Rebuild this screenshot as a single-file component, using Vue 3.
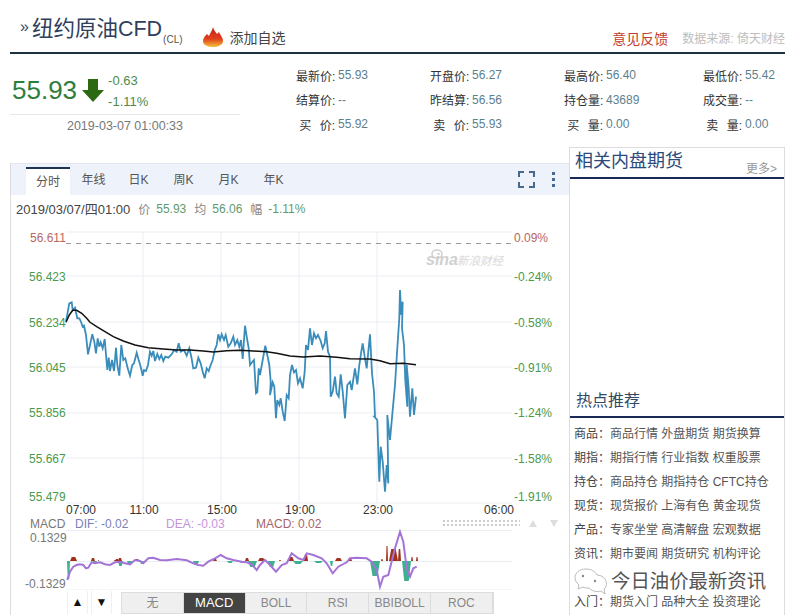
<template>
  <div class="page">
    <header class="head">
      <span class="mark">»</span>
      <h1 class="title">纽约原油CFD</h1>
      <span class="code">(CL)</span>
      <svg class="flame" width="22" height="22" viewBox="0 0 22 22">
        <defs>
          <linearGradient id="flameFill" x1="0" y1="0" x2="0" y2="1">
            <stop offset="0" stop-color="#c8201a" />
            <stop offset="0.6" stop-color="#e0401c" />
            <stop offset="1" stop-color="#f6c23c" />
          </linearGradient>
        </defs>
        <path d="M11 1 C12 5 14 6 15 8 L17 6 C18 9 21 11 21 15 C21 19 16 21 11 21 C6 21 1 19 1 15 C1 12 3 10 5 8 L7 10 C8 7 10 5 11 1 Z" fill="url(#flameFill)" />
      </svg>
      <span class="add">添加自选</span>
      <span class="feedback">意见反馈</span>
      <span class="source">数据来源: 倚天财经</span>
    </header>

    <section class="quote">
      <div class="price-box">
        <div class="price-row">
          <span class="price">55.93</span>
          <svg width="22" height="23" viewBox="0 0 22 23" class="down">
            <path d="M6 0 H16 V11 H22 L11 23 L0 11 H6 Z" fill="#2b6a12" />
          </svg>
          <div class="change">
            <div>-0.63</div>
            <div>-1.11%</div>
          </div>
        </div>
        <div class="time">2019-03-07 01:00:33</div>
      </div>
      <div class="stats">
        <div v-for="s in stats" :key="s.label" class="stat">
          <span class="stat-label">{{ s.label }}:</span>
          <span class="stat-value">{{ s.value }}</span>
        </div>
      </div>
    </section>

    <main class="main">
      <section class="panel">
        <div class="toolbar">
          <span v-for="(t, i) in tabs" :key="t" :class="['tab', { on: i === 0 }]">{{ t }}</span>
          <svg class="full" width="17" height="17" viewBox="0 0 17 17" fill="none" stroke="#48688c" stroke-width="2">
            <path d="M1 6 V1 H6 M11 1 H16 V6 M16 11 V16 H11 M6 16 H1 V11" />
          </svg>
          <svg class="more" width="4" height="16" viewBox="0 0 4 16" fill="#48688c">
            <rect x="0" y="0" width="3" height="3" />
            <rect x="0" y="6" width="3" height="3" />
            <rect x="0" y="12" width="3" height="3" />
          </svg>
        </div>
        <div class="info">
          <span class="info-date">2019/03/07/四01:00</span>
          <span class="info-key">价</span><span class="info-val">55.93</span>
          <span class="info-key">均</span><span class="info-val">56.06</span>
          <span class="info-key">幅</span><span class="info-val">-1.11%</span>
        </div>

        <svg class="chart" width="557" height="368" viewBox="11 222 557 368">
          <g stroke="#e9edf2" stroke-width="1">
            <line v-for="y in gridY" :key="y" x1="66" x2="512" :y1="y" :y2="y" />
            <line v-for="x in gridX" :key="x" :x1="x" :x2="x" y1="232" y2="503" />
            <line x1="66" x2="512" y1="530.5" y2="530.5" />
            <line x1="66" x2="512" y1="561.5" y2="561.5" />
            <line x1="66" x2="512" y1="590" y2="590" />
          </g>
          <line x1="66" x2="512" y1="243.5" y2="243.5" stroke="#999" stroke-dasharray="5 5" />

          <g class="wm">
            <ellipse cx="437" cy="254" rx="5" ry="4" fill="none" stroke="#d0d0d0" stroke-width="1.5" />
            <text x="426" y="265" class="wm-en">sina</text>
            <text x="457" y="265" class="wm-cn">新浪财经</text>
          </g>

          <polyline :points="priceLine" fill="none" stroke="#3a8dbb" stroke-width="1.8" />
          <polyline :points="avgLine" fill="none" stroke="#111" stroke-width="1.5" />

          <text x="30" y="242" class="axis red">56.611</text>
          <text v-for="l in leftAxis" :key="l.t" x="29" :y="l.y" class="axis green">{{ l.t }}</text>
          <text x="514" y="242" class="axis red">0.09%</text>
          <text v-for="l in rightAxis" :key="l.t" x="514" :y="l.y" class="axis green">{{ l.t }}</text>

          <text v-for="l in timeAxis" :key="l.t" :x="l.x" y="514" class="axis time-l" text-anchor="middle">{{ l.t }}</text>

          <text x="30" y="528" class="axis macd-k">MACD</text>
          <text x="75" y="528" class="axis dif">DIF: -0.02</text>
          <text x="166" y="528" class="axis dea">DEA: -0.03</text>
          <text x="256" y="528" class="axis mac">MACD: 0.02</text>
          <text x="30" y="542" class="axis macd-k">0.1329</text>
          <text x="25" y="588" class="axis macd-k">-0.1329</text>

          <line x1="443" x2="520" y1="521" y2="521" stroke="#ccc" stroke-width="2" stroke-dasharray="2 2" />
          <line x1="443" x2="520" y1="525" y2="525" stroke="#ccc" stroke-width="2" stroke-dasharray="2 2" />
          <path d="M529 527 L533 520 L537 527 Z M550 520 L558 520 L554 527 Z" fill="#ddd" />

          <polygon v-for="(b, i) in upBars" :key="'u' + i" :points="barShape(b, -1)" fill="#a3301a" />
          <polygon v-for="(b, i) in downBars" :key="'d' + i" :points="barShape(b, 1)" fill="#3fb08f" />
          <polyline :points="macdLine" fill="none" stroke="#a374d6" stroke-width="2" />
        </svg>

        <div class="controls">
          <span class="step">▲</span>
          <span class="step">▼</span>
          <div class="inds">
            <span v-for="(n, i) in indicators" :key="n" :class="['ind', { on: i === 1 }]">{{ n }}</span>
          </div>
        </div>
      </section>

      <aside class="side">
        <div class="side-head">
          <h2>相关内盘期货</h2>
          <span class="side-more">更多&gt;</span>
        </div>
        <div class="side-empty"></div>
        <h3 class="hot-title">热点推荐</h3>
        <ul class="hot">
          <li v-for="r in hotRows" :key="r.k"><span class="hot-k">{{ r.k }}：</span>{{ r.v }}</li>
          <li class="stamp">
            <svg width="34" height="28" viewBox="0 0 34 28" fill="#fff" stroke="#bbb" stroke-width="1">
              <path d="M12 2 C5 2 1 6 1 11 C1 14 3 16 5 18 L4 22 L9 20 C11 21 13 21 15 21 C19 25 24 25 27 24 L31 27 L30 22 C33 20 33 15 31 12 C29 9 25 8 23 8 C21 4 17 2 12 2 Z" />
              <circle cx="9" cy="9" r="1.2" fill="#888" stroke="none" />
              <circle cx="21" cy="14" r="1.2" fill="#888" stroke="none" />
            </svg>
            <span>今日油价最新资讯</span>
          </li>
          <li><span class="hot-k">入门：</span>期货入门 品种大全 投资理论</li>
        </ul>
      </aside>
    </main>
  </div>
</template>

<script setup>
const stats = [
  { label: '最新价', value: '55.93' },
  { label: '开盘价', value: '56.27' },
  { label: '最高价', value: '56.40' },
  { label: '最低价', value: '55.42' },
  { label: '结算价', value: '--' },
  { label: '昨结算', value: '56.56' },
  { label: '持仓量', value: '43689' },
  { label: '成交量', value: '--' },
  { label: '买 价', value: '55.92' },
  { label: '卖 价', value: '55.93' },
  { label: '买 量', value: '0.00' },
  { label: '卖 量', value: '0.00' }
]

const tabs = ['分时', '年线', '日K', '周K', '月K', '年K']
const indicators = ['无', 'MACD', 'BOLL', 'RSI', 'BBIBOLL', 'ROC']

const hotRows = [
  { k: '商品', v: '商品行情 外盘期货 期货换算' },
  { k: '期指', v: '期指行情 行业指数 权重股票' },
  { k: '持仓', v: '商品持仓 期指持仓 CFTC持仓' },
  { k: '现货', v: '现货报价 上海有色 黄金现货' },
  { k: '产品', v: '专家坐堂 高清解盘 宏观数据' },
  { k: '资讯', v: '期市要闻 期货研究 机构评论' }
]

const gridY = [232, 276, 322, 367, 413, 458, 503]
const gridX = [143, 221, 299, 377]

const leftAxis = [
  { t: '56.423', y: 281 },
  { t: '56.234', y: 327 },
  { t: '56.045', y: 372 },
  { t: '55.856', y: 417 },
  { t: '55.667', y: 463 },
  { t: '55.479', y: 501 }
]
const rightAxis = [
  { t: '-0.24%', y: 281 },
  { t: '-0.58%', y: 327 },
  { t: '-0.91%', y: 372 },
  { t: '-1.24%', y: 417 },
  { t: '-1.58%', y: 463 },
  { t: '-1.91%', y: 501 }
]
const timeAxis = [
  { t: '07:00', x: 81 },
  { t: '11:00', x: 144 },
  { t: '15:00', x: 222 },
  { t: '19:00', x: 300 },
  { t: '23:00', x: 378 },
  { t: '06:00', x: 499 }
]

// traced off the picture, in page pixels x3 with an origin per segment
const scale = (pts, ox, oy) => pts.map(([x, y]) => `${(ox + x / 3).toFixed(1)},${(oy + y / 3).toFixed(1)}`).join(' ')

const priceLine = [
  scale([[18,110],[28,55],[35,52],[38,75],[45,68],[52,100],[58,100],[62,108],[68,125],[72,122],[78,150],[84,208],[90,180],[97,148],[103,170],[108,205],[113,160],[118,185],[122,172],[128,190],[134,162],[138,210],[142,255],[146,218],[150,258],[156,225],[162,258],[168,188],[172,240],[178,272],[184,180],[190,225],[196,220],[203,250],[210,272],[217,240],[222,235],[230,203],[236,225],[242,245],[248,272],[252,255],[258,258],[264,240],[270,200],[275,212],[280,198],[285,228],[292,207],[298,222],[304,210],[310,228],[316,215],[325,218],[335,208],[342,195],[350,200],[356,175],[362,200],[372,195],[380,212],[388,190],[394,215],[400,250],[408,248],[415,218],[422,235],[428,260],[434,280],[440,250],[446,258],[452,240],[458,225],[464,195],[470,180],[475,148],[480,165],[485,148],[492,165],[497,150],[505,185],[512,175],[520,155],[525,180],[532,165],[538,185],[543,165],[548,222],[555,122]], 60, 285),
  scale([[20,155],[26,190],[30,240],[36,232],[42,225],[48,325],[52,322],[56,250],[60,270],[68,225],[76,182],[82,210],[88,240],[92,290],[90,330],[98,292],[103,305],[108,400],[112,345],[118,360],[122,340],[128,380],[134,408],[140,330],[146,340],[150,270],[156,240],[162,262],[168,255],[174,295],[180,280],[188,310],[194,260],[198,180],[204,195],[210,130],[216,180],[222,145],[228,160],[234,150],[242,168],[248,190],[254,175],[258,138],[264,200],[270,215],[272,335],[278,320],[285,275],[290,325],[296,335],[302,268],[308,320],[315,400],[322,300],[330,290],[335,315],[345,250],[352,298],[358,240],[364,200],[368,175],[374,215],[380,250],[390,148],[396,265],[402,320],[405,395]], 240, 285),
  scale([[43,50],[52,60],[58,245],[62,140],[68,185],[75,275],[80,195],[85,250],[82,45],[90,120],[100,10]], 360, 400),
  scale([[465,300],[472,190],[478,100],[480,15],[484,90],[488,50],[486,130],[492,180],[496,285],[502,365],[500,240],[506,310],[510,395],[517,310],[522,390],[528,335]], 240, 285)
].join(' ')

const avgLine = [
  scale([[18,112],[28,90],[38,76],[50,76],[65,85],[80,100],[90,112],[110,125],[135,140],[160,155],[190,168],[225,180],[265,188],[310,192],[350,195],[390,195],[430,198],[460,201],[500,197]], 60, 285),
  scale([[0,196],[40,198],[80,200],[110,205],[150,213],[190,216],[240,213],[290,217],[330,221],[390,222],[420,227],[450,236],[490,235],[528,239]], 240, 285)
].join(' ')

const macdLine = [
  scale([[22,165],[30,140],[40,125],[50,120],[60,118],[70,120],[78,130],[85,128],[95,112],[105,115],[120,112],[135,118],[150,120],[165,112],[180,110],[195,115],[210,118],[225,105],[240,108],[250,115],[265,100],[280,98],[300,105],[320,106],[350,102],[380,106],[400,115],[415,120],[430,122],[445,110],[465,100],[482,90],[500,100],[520,105],[545,110]], 60, 525),
  scale([[0,110],[20,112],[35,118],[50,135],[60,120],[75,105],[90,120],[108,140],[125,120],[140,115],[155,85],[175,100],[190,105],[200,85],[220,90],[245,100],[260,115],[278,145],[295,125],[320,112],[330,100],[350,98],[380,100],[395,110],[410,135],[420,185],[430,155],[445,150],[465,70],[480,20],[490,50],[500,130],[510,155],[520,130],[530,125]], 240, 525)
].join(' ')

const upBars = [
  { x: 70, w: 7, h: 4 }, { x: 91, w: 4, h: 3 }, { x: 98, w: 1, h: 1 }, { x: 115, w: 4, h: 2 },
  { x: 114, w: 2, h: 1 }, { x: 118, w: 4, h: 3 }, { x: 135, w: 4, h: 2 }, { x: 213, w: 4, h: 2 },
  { x: 245, w: 4, h: 3 }, { x: 258, w: 7, h: 3 }, { x: 279, w: 2, h: 1 }, { x: 288, w: 6, h: 4 },
  { x: 304, w: 4, h: 7 }, { x: 335, w: 7, h: 3 }, { x: 348, w: 4, h: 3 }, { x: 381, w: 2, h: 2 },
  { x: 386, w: 2, h: 15 }, { x: 389, w: 9, h: 12 }, { x: 398, w: 3, h: 12 }, { x: 411, w: 2, h: 4 }, { x: 416, w: 2, h: 4 }
]
const downBars = [
  { x: 67, w: 3, h: 18 }, { x: 93, w: 4, h: 2 }, { x: 118, w: 5, h: 5 }, { x: 127, w: 5, h: 4 },
  { x: 140, w: 4, h: 3 }, { x: 193, w: 6, h: 4 }, { x: 227, w: 6, h: 2 }, { x: 240, w: 6, h: 2 },
  { x: 248, w: 9, h: 6 }, { x: 268, w: 7, h: 6 }, { x: 293, w: 10, h: 3 }, { x: 314, w: 9, h: 2 },
  { x: 330, w: 3, h: 5 }, { x: 370, w: 10, h: 15 }, { x: 402, w: 9, h: 20 }
]

// histogram humps taper away from the zero line
const barShape = (b, dir) => {
  const tip = 561 + dir * b.h
  return `${b.x},561 ${b.x + b.w * 0.25},${tip} ${b.x + b.w * 0.75},${tip} ${b.x + b.w},561`
}
</script>

<style scoped>
.page {
  position: relative;
  width: 791px;
  height: 615px;
  overflow: hidden;
  background: #fff;
  font-family: "Liberation Sans", "Noto Sans CJK SC", sans-serif;
  font-size: 12px;
  color: #333;
}

.head {
  display: flex;
  align-items: flex-end;
  height: 52px;
  margin: 0 6px 0 10px;
  border-bottom: 2px solid #1d3340;
  box-sizing: content-box;
}

.mark {
  margin: 0 3px 17px 10px;
  font-size: 16px;
  line-height: 16px;
  color: #3a4a66;
}

.title {
  margin: 0 0 11px;
  font-size: 21.5px;
  line-height: 24px;
  font-weight: 400;
  color: #2f3f5c;
}

.code {
  margin: 0 0 6px 1px;
  font-size: 10px;
  line-height: 12px;
  color: #555;
}

.flame {
  margin: 0 0 4px 19px;
}

.add {
  margin: 0 0 6px 6px;
  font-size: 14px;
  line-height: 16px;
  color: #444;
}

.feedback {
  margin: 0 0 5px auto;
  font-size: 14px;
  line-height: 16px;
  color: #c23b2e;
}

.source {
  margin: 0 0 5px 14px;
  font-size: 12px;
  line-height: 16px;
  color: #bdbdbd;
}

.quote {
  display: flex;
  height: 93px;
  margin-left: 10px;
}

.price-box {
  width: 230px;
}

.price-row {
  display: flex;
  align-items: center;
  height: 61px;
  padding-top: 13px;
  box-sizing: border-box;
  border-bottom: 1px solid #e6e6e6;
}

.price {
  margin-left: 2px;
  font-size: 26px;
  color: #2f7d3a;
}

.down {
  margin-left: 5px;
}

.change {
  margin: 0 0 0 4px;
  font-size: 13px;
  line-height: 21px;
  color: #4d8a4d;
}

.time {
  margin-top: 2px;
  text-align: center;
  font-size: 12.5px;
  line-height: 18px;
  color: #777;
}

.stats {
  display: grid;
  grid-template-columns: 134px 134px 139px 82px;
  grid-auto-rows: 24.5px;
  margin: 9px 0 0 56px;
}

.stat {
  display: flex;
  align-items: center;
  font-size: 12px;
  white-space: nowrap;
}

.stat-label {
  width: 39px;
  text-align: right;
  word-spacing: 5px;
  color: #333;
}

.stat-value {
  margin-left: 3px;
  color: #5d7f8d;
}

.main {
  display: flex;
  align-items: flex-start;
  margin-left: 10px;
}

.panel {
  width: 559px;
  height: 452px;
  margin-top: 16px;
  border-left: 1px solid #ddd;
  box-sizing: border-box;
}

.toolbar {
  display: flex;
  align-items: flex-end;
  height: 32px;
  padding-left: 15px;
  background: #eef3fb;
  border-top: 1px solid #e2e6ee;
  box-sizing: border-box;
}

.tab {
  width: 45px;
  height: 27px;
  margin-bottom: 1px;
  text-align: center;
  font-size: 12px;
  line-height: 26px;
  color: #555;
}

.tab.on {
  width: 44px;
  height: 28px;
  margin: 0 1px 0 0;
  background: #fff;
  border-top: 2px solid #1d3350;
  box-sizing: border-box;
}

.full {
  margin: 0 17px 7px auto;
}

.more {
  margin: 0 13px 7px 0;
}

.info {
  display: flex;
  align-items: center;
  height: 27px;
  padding-left: 5px;
  font-size: 12px;
  color: #5f9a6e;
}

.info-date {
  font-size: 13px;
  color: #444;
  margin-right: 8px;
}

.info-key {
  color: #888;
  margin-right: 6px;
}

.info-val {
  margin-right: 8px;
}

.chart {
  display: block;
}

.axis {
  font-size: 12px;
}

.red { fill: #b8675f; }
.green { fill: #4b9a4b; }
.time-l { fill: #333; }
.macd-k { fill: #777; }
.dif { fill: #7a7fba; }
.dea { fill: #c693dc; }
.mac { fill: #a7636c; }

.wm-en {
  font-size: 16px;
  font-weight: 700;
  font-style: italic;
  fill: #d0d0d0;
}

.wm-cn {
  font-size: 11.5px;
  font-style: italic;
  fill: #d8d8d8;
}

.controls {
  display: flex;
  align-items: center;
  height: 25px;
  padding-left: 56px;
}

.step {
  width: 21px;
  height: 23px;
  margin-right: 3px;
  text-align: center;
  font-size: 12px;
  line-height: 22px;
  color: #111;
  border: 1px solid #f0f0f0;
  border-width: 0 1px;
  box-sizing: border-box;
}

.inds {
  display: flex;
  margin-left: 6px;
  border: 1px solid #ddd;
}

.ind {
  width: 61.8px;
  height: 20px;
  text-align: center;
  font-size: 12px;
  line-height: 20px;
  color: #888;
  background: #efefef;
  border-right: 1px solid #ddd;
  box-sizing: border-box;
}

.ind.on {
  font-size: 13px;
  background: #444;
  color: #fff;
}

.side {
  width: 216px;
  height: 468px;
  border: 1px solid #ddd;
  border-bottom: 0;
  box-sizing: border-box;
}

.side-head {
  display: flex;
  align-items: flex-start;
  justify-content: space-between;
  height: 29px;
  padding: 0 7px 0 5px;
  border-bottom: 2px solid #1a2a56;
  box-sizing: content-box;
}

.side-head h2 {
  margin: 0;
  font-size: 18px;
  line-height: 26px;
  font-weight: 400;
  color: #2b4a7c;
}

.side-more {
  margin-top: 11px;
  font-size: 12px;
  color: #999;
}

.side-empty {
  height: 208px;
}

.hot-title {
  margin: 0;
  padding: 0 0 0 6px;
  height: 29px;
  font-size: 16px;
  font-weight: 400;
  line-height: 27px;
  color: #2f4a66;
  border-bottom: 2px solid #1a2a56;
  box-sizing: content-box;
}

.hot {
  list-style: none;
  margin: 4px 0 0;
  padding: 0 0 0 4px;
}

.hot li {
  height: 24px;
  font-size: 12px;
  line-height: 24px;
  color: #555;
  white-space: nowrap;
}

.hot-k {
  color: #444;
}

.hot li.stamp {
  display: flex;
  align-items: center;
  height: 24px;
  padding-top: 6px;
  box-sizing: border-box;
  font-size: 19.4px;
  line-height: 18px;
  color: #555;
}

.stamp svg {
  flex: none;
  margin-right: 3px;
}
</style>
